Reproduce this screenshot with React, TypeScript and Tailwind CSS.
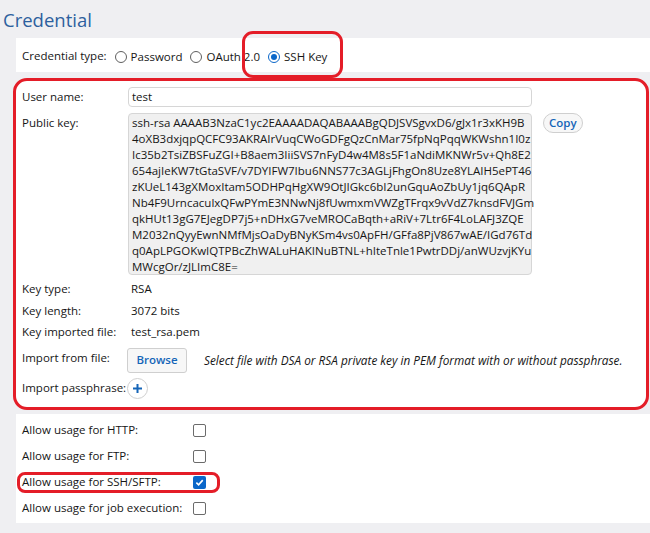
const KEY_LINES = [
  'ssh-rsa AAAAB3NzaC1yc2EAAAADAQABAAABgQDJSVSgvxD6/gJx1r3xKH9B',
  '4oXB3dxjqpQCFC93AKRAIrVuqCWoGDFgQzCnMar75fpNqPqqWKWshn1I0z',
  'Ic35b2TsiZBSFuZGI+B8aem3IiiSVS7nFyD4w4M8s5F1aNdiMKNWr5v+Qh8E2',
  '654ajIeKW7tGtaSVF/v7DYIFW7Ibu6NNS77c3AGLjFhgOn8Uze8YLAIH5ePT46',
  'zKUeL143gXMoxItam5ODHPqHgXW9OtJIGkc6bI2unGquAoZbUy1jq6QApR',
  'Nb4F9UrncaculxQFwPYmE3NNwNj8fUwmxmVWZgTFrqx9vVdZ7knsdFVJGm',
  'qkHUt13gG7EJegDP7j5+nDHxG7veMROCaBqth+aRiV+7Ltr6F4LoLAFJ3ZQE',
  'M2032nQyyEwnNMfMjsOaDyBNyKSm4vs0ApFH/GFfa8PjV867wAE/IGd76Td',
  'q0ApLPGOKwIQTPBcZhWALuHAKINuBTNL+hIteTnle1PwtrDDj/anWUzvjKYu',
  'MWcgOr/zJLImC8E=',
];

function Radio({ label, checked }: { label: string; checked?: boolean }) {
  return (
    <span className="flex items-center gap-[4px]">
      <span
        className={`flex h-[12px] w-[12px] items-center justify-center rounded-full border ${
          checked ? 'border-[#0b67c9]' : 'border-[#5f5f5f]'
        } bg-white`}
      >
        {checked && <span className="h-[6px] w-[6px] rounded-full bg-[#0b67c9]" />}
      </span>
      <span>{label}</span>
    </span>
  );
}

function Checkbox({ checked }: { checked?: boolean }) {
  return checked ? (
    <span className="flex h-[13px] w-[13px] items-center justify-center rounded-[2px] bg-[#0b67c9]">
      <svg width="9" height="9" viewBox="0 0 10 10">
        <path d="M1.5 5.2 L4 7.6 L8.6 2.4" fill="none" stroke="white" strokeWidth="1.8" />
      </svg>
    </span>
  ) : (
    <span className="h-[13px] w-[13px] rounded-[2px] border border-[#6b6b6b] bg-white" />
  );
}

function InfoRow({ label, value }: { label: string; value: string }) {
  return (
    <div className="flex h-[21.5px] items-center">
      <span className="w-[106px]">{label}</span>
      <span className="pl-[3px]">{value}</span>
    </div>
  );
}

export default function App() {
  return (
    <div
      className="relative h-[533px] w-[650px] overflow-hidden bg-[#efeff2] text-[11.5px] text-[#161616]"
      style={{ fontFamily: '"Open Sans", sans-serif' }}
    >
      <h1 className="h-[38px] pl-[3px] pt-[7px] text-[18.5px] leading-[26px] text-[#2d5f9e]">Credential</h1>

      {/* Credential type */}
      <div className="ml-[16px] flex h-[34px] items-center bg-white pl-[6px] pt-[3px]">
        <span className="mr-[8px] -mt-[2px]">Credential type:</span>
        <div className="flex items-center gap-[8px]">
          <Radio label="Password" />
          <Radio label="OAuth 2.0" />
          <Radio label="SSH Key" checked />
        </div>
      </div>

      {/* SSH key details */}
      <div className="ml-[13px] mr-[1px] mt-[6px] h-[332px] rounded-[14px] border-[3px] border-[#e41d28] bg-white pl-[6px] pt-[6px]">
        <div className="flex items-center">
          <span className="w-[106px]">User name:</span>
          <div className="flex h-[20px] w-[404px] items-center rounded-[4px] border border-[#d6d6d6] bg-white pl-[3px]">
            test
          </div>
        </div>
        <div className="mt-[6px] flex items-start">
          <span className="w-[106px] pt-[1px]">Public key:</span>
          <div className="h-[162px] w-[404px] rounded-[4px] border border-[#d6d6d6] bg-[#f0f0f0] pl-[3px] pt-[1px] leading-[16px] whitespace-nowrap">
            {KEY_LINES.map((l) => (
              <div key={l}>{l}</div>
            ))}
          </div>
          <button className="ml-[11px] h-[20px] rounded-full border border-[#cfcfcf] bg-[#f7f7f7] px-[5px] text-[11.5px] font-semibold leading-[18px] text-[#1565b8]">
            Copy
          </button>
        </div>
        <div className="mt-[3px]">
          <InfoRow label="Key type:" value="RSA" />
          <InfoRow label="Key length:" value="3072 bits" />
          <InfoRow label="Key imported file:" value="test_rsa.pem" />
        </div>
        <div className="mt-[5px] flex items-start">
          <span className="w-[105px] pt-[1px]">Import from file:</span>
          <button className="h-[25px] w-[60px] rounded-[3px] border border-[#cfcfcf] bg-[#f7f7f7] text-[11.5px] font-semibold text-[#1565b8]">
            Browse
          </button>
          <span className="ml-[17px] pt-[4px] text-[11.8px] italic">
            Select file with DSA or RSA private key in PEM format with or without passphrase.
          </span>
        </div>
        <div className="mt-[5px] flex items-center">
          <span className="w-[105px]">Import passphrase:</span>
          <button className="flex h-[21px] w-[21px] items-center justify-center rounded-full border border-[#cfcfcf] bg-white">
            <svg width="11" height="11" viewBox="0 0 11 11">
              <path d="M5.5 1 V10 M1 5.5 H10" stroke="#1565b8" strokeWidth="2" />
            </svg>
          </button>
        </div>
      </div>

      {/* Usage */}
      <div className="ml-[16px] mt-[4px] h-[109px] bg-white pl-[6px] pt-[3px]">
        {[
          ['Allow usage for HTTP:', false],
          ['Allow usage for FTP:', false],
          ['Allow usage for SSH/SFTP:', true],
          ['Allow usage for job execution:', false],
        ].map(([label, checked]) => (
          <div key={label as string} className="flex h-[26px] items-center">
            <span className="w-[171px]">{label as string}</span>
            <Checkbox checked={checked as boolean} />
          </div>
        ))}
      </div>

      {/* annotations */}
      <div className="pointer-events-none absolute left-[242px] top-[31px] h-[47px] w-[101px] rounded-[11px] border-[3px] border-[#e41d28]" />
      <div className="pointer-events-none absolute left-[17px] top-[472px] h-[21px] w-[203px] rounded-[8px] border-[3px] border-[#e41d28]" />
    </div>
  );
}
